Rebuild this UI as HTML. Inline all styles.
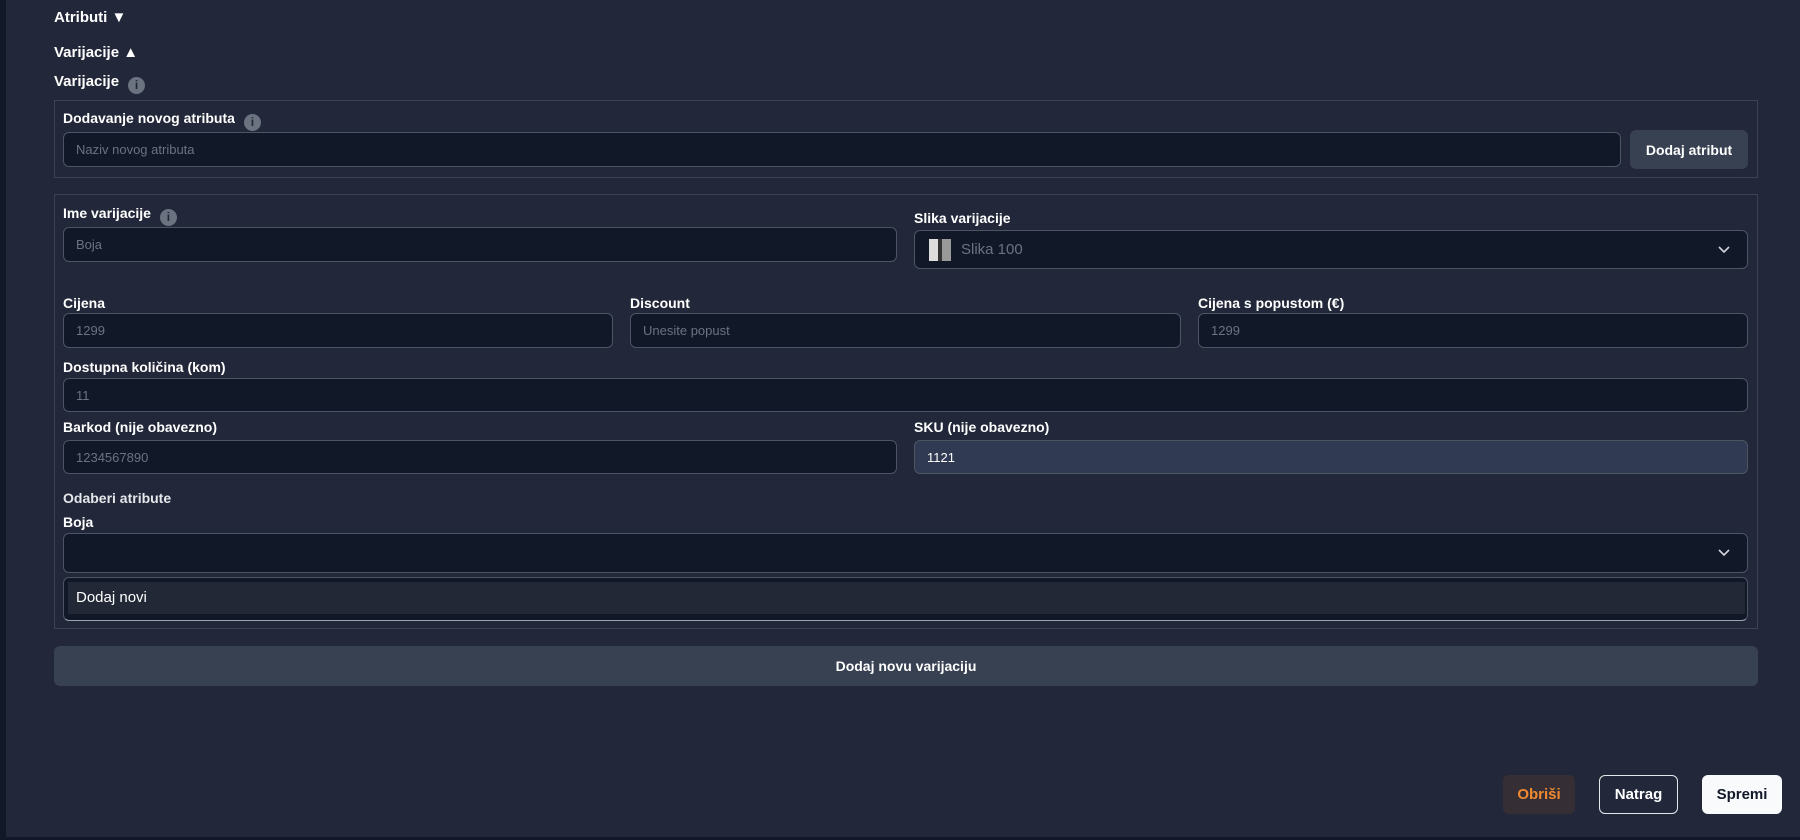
<!DOCTYPE html>
<html><head><meta charset="utf-8"><style>
*{box-sizing:border-box;margin:0;padding:0}
body{width:1800px;height:840px;background:#222839;font-family:"Liberation Sans",sans-serif;color:#fff;position:relative;overflow:hidden}
.a{position:absolute}
.strip{left:0;top:0;width:6px;height:840px;background:#111827}
.bot{left:0;top:837px;width:1800px;height:3px;background:#111827}
.h{font-weight:bold;font-size:15px;line-height:18px}
.lbl{font-weight:bold;font-size:14px;line-height:17px}
.box{border:1px solid #3a4356}
.in{background:#111827;border:1px solid #4b5563;border-radius:6px;font-size:13px;color:#6b7280;padding-left:12px;display:flex;align-items:center}
.info{display:inline-block;width:17px;height:17px;border-radius:50%;background:#6b7280;color:#222839;font-size:12px;font-weight:bold;text-align:center;line-height:17px;vertical-align:-3px;margin-left:9px}
.chev{position:absolute;right:16px;top:50%;margin-top:-5px}
.btn{display:flex;align-items:center;justify-content:center;font-weight:bold;font-size:15px;border-radius:6px}
</style></head><body>
<div class="a strip"></div><div class="a bot"></div>
<div class="a h" style="left:54px;top:9px">Atributi ▼</div>
<div class="a h" style="left:54px;top:44px">Varijacije ▲</div>
<div class="a h" style="left:54px;top:73px">Varijacije<span class="info">i</span></div>

<div class="a box" style="left:54px;top:100px;width:1704px;height:78px"></div>
<div class="a lbl" style="left:63px;top:110px">Dodavanje novog atributa<span class="info">i</span></div>
<div class="a in" style="left:63px;top:132px;width:1558px;height:35px">Naziv novog atributa</div>
<div class="a btn" style="left:1630px;top:130px;width:118px;height:39px;background:#374151;font-size:14px">Dodaj atribut</div>

<div class="a box" style="left:54px;top:194px;width:1704px;height:435px"></div>
<div class="a lbl" style="left:63px;top:205px">Ime varijacije<span class="info">i</span></div>
<div class="a in" style="left:63px;top:227px;width:834px;height:35px">Boja</div>
<div class="a lbl" style="left:914px;top:210px">Slika varijacije</div>
<div class="a in" style="left:914px;top:230px;width:834px;height:39px;font-size:15px;padding-left:14px">
<span style="display:inline-block;width:22px;height:22px;background:linear-gradient(90deg,#ddd 0 40%,#333 40% 60%,#999 60%);margin-right:10px"></span>Slika 100
<svg class="chev" width="14" height="10" viewBox="0 0 14 10"><path d="M2 2l5 5 5-5" stroke="#d1d5db" stroke-width="1.6" fill="none"/></svg></div>

<div class="a lbl" style="left:63px;top:295px">Cijena</div>
<div class="a in" style="left:63px;top:313px;width:550px;height:35px">1299</div>
<div class="a lbl" style="left:630px;top:295px">Discount</div>
<div class="a in" style="left:630px;top:313px;width:551px;height:35px">Unesite popust</div>
<div class="a lbl" style="left:1198px;top:295px">Cijena s popustom (€)</div>
<div class="a in" style="left:1198px;top:313px;width:550px;height:35px">1299</div>

<div class="a lbl" style="left:63px;top:359px">Dostupna količina (kom)</div>
<div class="a in" style="left:63px;top:378px;width:1685px;height:34px">11</div>

<div class="a lbl" style="left:63px;top:419px">Barkod (nije obavezno)</div>
<div class="a in" style="left:63px;top:440px;width:834px;height:34px">1234567890</div>
<div class="a lbl" style="left:914px;top:419px">SKU (nije obavezno)</div>
<div class="a in" style="left:914px;top:440px;width:834px;height:34px;background:#303a52;color:#fff">1121</div>

<div class="a" style="left:63px;top:490px;font-size:14px;font-weight:bold;color:#e5e7eb">Odaberi atribute</div>
<div class="a lbl" style="left:63px;top:514px">Boja</div>
<div class="a in" style="left:63px;top:533px;width:1685px;height:40px">
<svg class="chev" width="14" height="10" viewBox="0 0 14 10"><path d="M2 2l5 5 5-5" stroke="#d1d5db" stroke-width="1.6" fill="none"/></svg></div>
<div class="a" style="left:63px;top:577px;width:1685px;height:44px;background:#111827;border:1px solid #4b5563;border-bottom:1px solid #9ca3af;border-radius:6px"></div>
<div class="a" style="left:68px;top:582px;width:1677px;height:32px;background:#222836;font-size:15px;padding-left:8px;line-height:32px">Dodaj novi</div>

<div class="a btn" style="left:54px;top:646px;width:1704px;height:40px;background:#374151;font-size:14px">Dodaj novu varijaciju</div>

<div class="a btn" style="left:1503px;top:775px;width:72px;height:39px;background:#352f35;color:#f08a30">Obriši</div>
<div class="a btn" style="left:1599px;top:775px;width:79px;height:39px;border:1px solid #e5e7eb">Natrag</div>
<div class="a btn" style="left:1702px;top:775px;width:80px;height:39px;background:#f9fafb;color:#111827">Spremi</div>
</body></html>
